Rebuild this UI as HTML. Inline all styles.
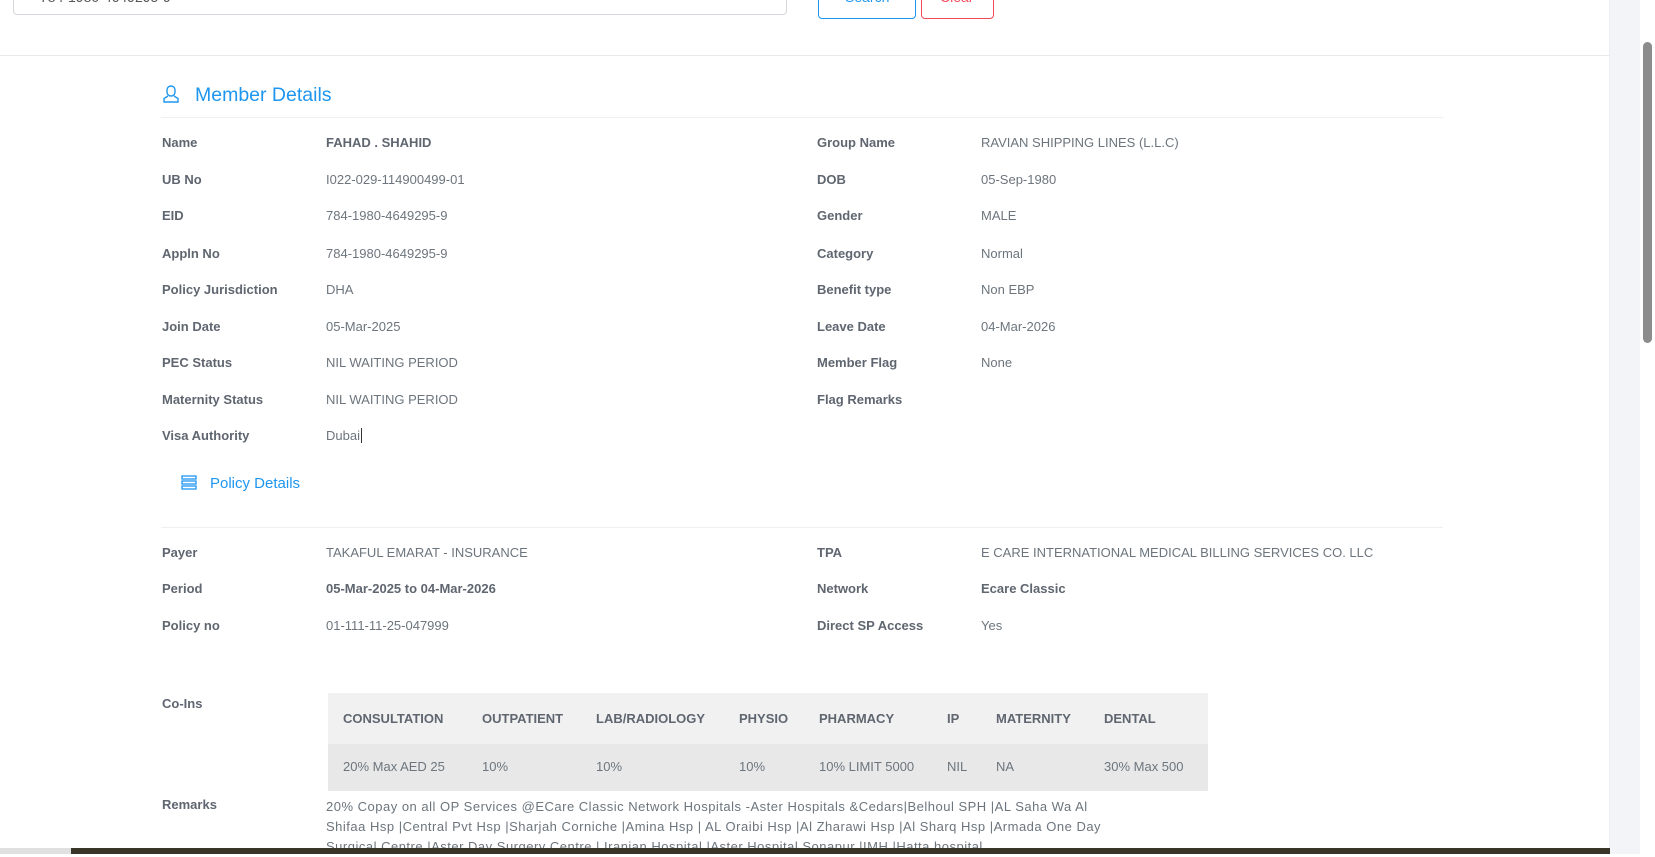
<!DOCTYPE html>
<html><head><meta charset="utf-8"><style>
*{box-sizing:border-box;margin:0;padding:0}
body{width:1655px;height:854px;overflow:hidden;background:#fff;font-family:"Liberation Sans",sans-serif;font-size:13px;color:#6c757d;position:relative}
.a{position:absolute;white-space:nowrap}
.l{font-weight:bold;color:#5f6670}
.v{color:#6c757d}
.b{font-weight:bold;color:#5f6670}
.blue{color:#1e96f0}
</style></head><body>
<div class="a" style="left:13px;top:-20px;width:774px;height:35px;border:1px solid #d5d5dc;border-radius:4px"></div>
<div class="a v" style="left:40px;top:-11px;font-size:14px;color:#555">784-1980-4649295-9</div>
<div class="a" style="left:818px;top:-20px;width:98px;height:39px;border:1px solid #1e96f0;border-radius:4px"></div>
<div class="a blue" style="left:845px;top:-11px;font-size:14px">Search</div>
<div class="a" style="left:921px;top:-20px;width:73px;height:39px;border:1px solid #f04a5a;border-radius:4px"></div>
<div class="a" style="left:940px;top:-11px;font-size:14px;color:#f04a5a">Clear</div>
<div class="a" style="left:0;top:55px;width:1610px;height:1px;background:#e8e8ec"></div>
<div class="a" style="left:1609px;top:0;width:1px;height:854px;background:#eceef2"></div>
<div class="a" style="left:1610px;top:0;width:30px;height:854px;background:#f3f4f8"></div>
<div class="a" style="left:1643px;top:42px;width:9px;height:301px;background:#8c8c8c;border-radius:5px"></div>
<svg class="a" style="left:161px;top:84px" width="20" height="20" viewBox="0 0 20 20" fill="none" stroke="#1e96f0" stroke-width="1.4"><path d="M10 2a4 4 0 0 1 4 4v2a4 4 0 0 1-8 0V6a4 4 0 0 1 4-4zM7 12l-4 2.5V18h14v-3.5L13 12"/></svg>
<div class="a blue" style="left:195px;top:84px;font-size:19.5px">Member Details</div>
<div class="a" style="left:161px;top:117px;width:1282px;height:1px;background:#eef0f2"></div>

<div class="a l" style="left:162px;top:135px">Name</div><div class="a b" style="left:326px;top:135px">FAHAD . SHAHID</div>
<div class="a l" style="left:162px;top:172px">UB No</div><div class="a v" style="left:326px;top:172px">I022-029-114900499-01</div>
<div class="a l" style="left:162px;top:208px">EID</div><div class="a v" style="left:326px;top:208px">784-1980-4649295-9</div>
<div class="a l" style="left:162px;top:246px">Appln No</div><div class="a v" style="left:326px;top:246px">784-1980-4649295-9</div>
<div class="a l" style="left:162px;top:282px">Policy Jurisdiction</div><div class="a v" style="left:326px;top:282px">DHA</div>
<div class="a l" style="left:162px;top:319px">Join Date</div><div class="a v" style="left:326px;top:319px">05-Mar-2025</div>
<div class="a l" style="left:162px;top:355px">PEC Status</div><div class="a v" style="left:326px;top:355px">NIL WAITING PERIOD</div>
<div class="a l" style="left:162px;top:392px">Maternity Status</div><div class="a v" style="left:326px;top:392px">NIL WAITING PERIOD</div>
<div class="a l" style="left:162px;top:428px">Visa Authority</div><div class="a v" style="left:326px;top:428px">Dubai<span style="border-left:1px solid #333;margin-left:1px"></span></div>

<div class="a l" style="left:817px;top:135px">Group Name</div><div class="a v" style="left:981px;top:135px">RAVIAN SHIPPING LINES (L.L.C)</div>
<div class="a l" style="left:817px;top:172px">DOB</div><div class="a v" style="left:981px;top:172px">05-Sep-1980</div>
<div class="a l" style="left:817px;top:208px">Gender</div><div class="a v" style="left:981px;top:208px">MALE</div>
<div class="a l" style="left:817px;top:246px">Category</div><div class="a v" style="left:981px;top:246px">Normal</div>
<div class="a l" style="left:817px;top:282px">Benefit type</div><div class="a v" style="left:981px;top:282px">Non EBP</div>
<div class="a l" style="left:817px;top:319px">Leave Date</div><div class="a v" style="left:981px;top:319px">04-Mar-2026</div>
<div class="a l" style="left:817px;top:355px">Member Flag</div><div class="a v" style="left:981px;top:355px">None</div>
<div class="a l" style="left:817px;top:392px">Flag Remarks</div>

<svg class="a" style="left:181px;top:475px" width="16" height="15" viewBox="0 0 16 15" fill="none" stroke="#1e96f0" stroke-width="1.3"><rect x="1" y="1" width="14" height="3"/><rect x="1" y="6" width="14" height="3"/><rect x="1" y="11" width="14" height="3"/></svg>
<div class="a blue" style="left:210px;top:475px;font-size:15px">Policy Details</div>
<div class="a" style="left:161px;top:527px;width:1282px;height:1px;background:#eef0f2"></div>

<div class="a l" style="left:162px;top:545px">Payer</div><div class="a v" style="left:326px;top:545px">TAKAFUL EMARAT - INSURANCE</div>
<div class="a l" style="left:162px;top:581px">Period</div><div class="a b" style="left:326px;top:581px">05-Mar-2025 to 04-Mar-2026</div>
<div class="a l" style="left:162px;top:618px">Policy no</div><div class="a v" style="left:326px;top:618px">01-111-11-25-047999</div>
<div class="a l" style="left:817px;top:545px">TPA</div><div class="a v" style="left:981px;top:545px">E CARE INTERNATIONAL MEDICAL BILLING SERVICES CO. LLC</div>
<div class="a l" style="left:817px;top:581px">Network</div><div class="a b" style="left:981px;top:581px">Ecare Classic</div>
<div class="a l" style="left:817px;top:618px">Direct SP Access</div><div class="a v" style="left:981px;top:618px">Yes</div>

<div class="a l" style="left:162px;top:696px">Co-Ins</div>
<div class="a" style="left:328px;top:693px;width:880px;height:51px;background:#f1f1f1"></div>
<div class="a" style="left:328px;top:744px;width:880px;height:47px;background:#e8e8e8"></div>
<div class="a b" style="left:343px;top:711px">CONSULTATION</div>
<div class="a b" style="left:482px;top:711px">OUTPATIENT</div>
<div class="a b" style="left:596px;top:711px">LAB/RADIOLOGY</div>
<div class="a b" style="left:739px;top:711px">PHYSIO</div>
<div class="a b" style="left:819px;top:711px">PHARMACY</div>
<div class="a b" style="left:947px;top:711px">IP</div>
<div class="a b" style="left:996px;top:711px">MATERNITY</div>
<div class="a b" style="left:1104px;top:711px">DENTAL</div>
<div class="a v" style="left:343px;top:759px">20% Max AED 25</div>
<div class="a v" style="left:482px;top:759px">10%</div>
<div class="a v" style="left:596px;top:759px">10%</div>
<div class="a v" style="left:739px;top:759px">10%</div>
<div class="a v" style="left:819px;top:759px">10% LIMIT 5000</div>
<div class="a v" style="left:947px;top:759px">NIL</div>
<div class="a v" style="left:996px;top:759px">NA</div>
<div class="a v" style="left:1104px;top:759px">30% Max 500</div>

<div class="a l" style="left:162px;top:797px">Remarks</div>
<div class="a v" style="left:326px;top:797px;line-height:20px;letter-spacing:0.5px">20% Copay on all OP Services @ECare Classic Network Hospitals -Aster Hospitals &amp;Cedars|Belhoul SPH |AL Saha Wa Al<br>Shifaa Hsp |Central Pvt Hsp |Sharjah Corniche |Amina Hsp | AL Oraibi Hsp |Al Zharawi Hsp |Al Sharq Hsp |Armada One Day<br>Surgical Centre |Aster Day Surgery Centre | Iranian Hospital |Aster Hospital Sonapur |IMH |Hatta hospital</div>

<div class="a" style="left:0;top:848px;width:71px;height:6px;background:#e0e0e0"></div>
<div class="a" style="left:71px;top:848px;width:1539px;height:6px;background:#3a3529"></div>
</body></html>
